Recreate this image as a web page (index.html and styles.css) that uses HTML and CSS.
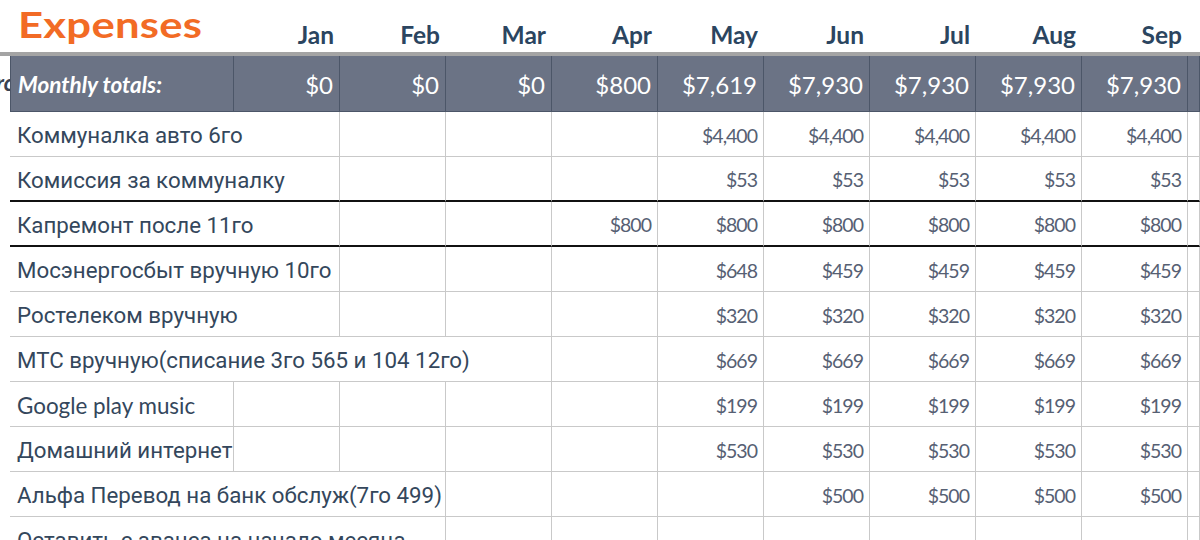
FILE: index.html
```html
<!DOCTYPE html>
<html lang="ru">
<head>
<meta charset="utf-8">
<title>Expenses</title>
<link rel="stylesheet" href="styles.css">
</head>
<body>
<div class="sheet">
  <div class="row head">
    <div class="title"><span class="title-text">Expenses</span></div>
    <div class="month">Jan</div><div class="month">Feb</div><div class="month">Mar</div><div class="month">Apr</div><div class="month">May</div><div class="month">Jun</div><div class="month">Jul</div><div class="month">Aug</div><div class="month">Sep</div><div class="month"></div>
  </div>
  <div class="row totals">
    <div class="gutter"><span class="clip">rc</span></div>
    <div class="tc label">Monthly totals:</div>
    <div class="tc">$0</div><div class="tc">$0</div><div class="tc">$0</div><div class="tc">$800</div><div class="tc">$7,619</div><div class="tc">$7,930</div><div class="tc">$7,930</div><div class="tc">$7,930</div><div class="tc">$7,930</div><div class="tc"></div>
  </div>

  <div class="row data">
    <div class="gutter"></div>
    <div class="c name cy s2">Коммуналка авто 6го</div>
    <div class="c"></div><div class="c"></div><div class="c"></div>
    <div class="c">$4,400</div><div class="c">$4,400</div><div class="c">$4,400</div><div class="c">$4,400</div><div class="c">$4,400</div><div class="c"></div>
  </div>
  <div class="row data thick">
    <div class="gutter"></div>
    <div class="c name cy s2">Комиссия за коммуналку</div>
    <div class="c"></div><div class="c"></div><div class="c"></div>
    <div class="c">$53</div><div class="c">$53</div><div class="c">$53</div><div class="c">$53</div><div class="c">$53</div><div class="c"></div>
  </div>
  <div class="row data thick">
    <div class="gutter"></div>
    <div class="c name cy s2">Капремонт после 11го</div>
    <div class="c"></div><div class="c"></div><div class="c">$800</div>
    <div class="c">$800</div><div class="c">$800</div><div class="c">$800</div><div class="c">$800</div><div class="c">$800</div><div class="c"></div>
  </div>
  <div class="row data">
    <div class="gutter"></div>
    <div class="c name cy s2">Мосэнергосбыт вручную 10го</div>
    <div class="c"></div><div class="c"></div><div class="c"></div>
    <div class="c">$648</div><div class="c">$459</div><div class="c">$459</div><div class="c">$459</div><div class="c">$459</div><div class="c"></div>
  </div>
  <div class="row data">
    <div class="gutter"></div>
    <div class="c name cy s2">Ростелеком вручную</div>
    <div class="c"></div><div class="c"></div><div class="c"></div>
    <div class="c">$320</div><div class="c">$320</div><div class="c">$320</div><div class="c">$320</div><div class="c">$320</div><div class="c"></div>
  </div>
  <div class="row data">
    <div class="gutter"></div>
    <div class="c name cy s4">МТС вручную(списание 3го 565 и 104 12го)</div>
    <div class="c"></div>
    <div class="c">$669</div><div class="c">$669</div><div class="c">$669</div><div class="c">$669</div><div class="c">$669</div><div class="c"></div>
  </div>
  <div class="row data">
    <div class="gutter"></div>
    <div class="c name">Google play music</div>
    <div class="c"></div><div class="c"></div><div class="c"></div><div class="c"></div>
    <div class="c">$199</div><div class="c">$199</div><div class="c">$199</div><div class="c">$199</div><div class="c">$199</div><div class="c"></div>
  </div>
  <div class="row data">
    <div class="gutter"></div>
    <div class="c name cy">Домашний интернет</div>
    <div class="c"></div><div class="c"></div><div class="c"></div><div class="c"></div>
    <div class="c">$530</div><div class="c">$530</div><div class="c">$530</div><div class="c">$530</div><div class="c">$530</div><div class="c"></div>
  </div>
  <div class="row data">
    <div class="gutter"></div>
    <div class="c name cy s3">Альфа Перевод на банк обслуж(7го 499)</div>
    <div class="c"></div><div class="c"></div>
    <div class="c"></div><div class="c">$500</div><div class="c">$500</div><div class="c">$500</div><div class="c">$500</div><div class="c"></div>
  </div>
  <div class="row data">
    <div class="gutter"></div>
    <div class="c name cy s3">Оставить с аванса на начало месяца</div>
    <div class="c"></div><div class="c"></div>
    <div class="c"></div><div class="c"></div><div class="c"></div><div class="c"></div><div class="c"></div><div class="c"></div>
  </div>
</div>
</body>
</html>
```
FILE: styles.css
```css
* { box-sizing: border-box; }
html, body { margin: 0; padding: 0; background: #fff; }
body {
  width: 1200px;
  height: 540px;
  overflow: hidden;
  font-family: Lato, Roboto, "Noto Sans", sans-serif;
}
.sheet { width: 1200px; }
.row {
  display: grid;
  grid-template-columns: 10px 224px repeat(9, 106px) 12px;
}
.head { height: 52px; }
.title {
  grid-column: 1 / span 2;
  padding-left: 18px;
  padding-top: 3px;
  font-size: 37px;
  font-weight: 700;
  color: #f26b25;
  line-height: 42px;
  white-space: nowrap;
}
.title-text {
  display: inline-block;
  transform: scaleX(1.18);
  transform-origin: left center;
  letter-spacing: 0.2px;
}
.month {
  align-self: end;
  text-align: right;
  padding-right: 6px;
  padding-bottom: 3px;
  font-size: 24.5px;
  font-weight: 700;
  color: #2b4560;
  line-height: 28px;
}
.totals {
  border-top: 4px solid #a4a4a4;
  height: 60px;
}
.gutter { position: relative; overflow: hidden; background: #fff; }
.clip {
  position: absolute;
  right: -4px;
  top: 13px;
  font-size: 22.5px;
  font-style: italic;
  font-weight: 700;
  color: #3a4250;
  line-height: 28px;
}
.tc {
  background: #6b7385;
  color: #fff;
  font-size: 24px;
  text-align: right;
  padding-right: 6px;
  border-right: 1px solid #4c5668;
  border-bottom: 1px solid #4c5668;
  display: flex;
  align-items: center;
  justify-content: flex-end;
  padding-top: 1px;
  white-space: nowrap;
}
.tc.label {
  justify-content: flex-start;
  padding-left: 7px;
  font-style: italic;
  font-weight: 700;
  font-size: 22.5px;
  border-left: 1px solid #4c5668;
}
.data { height: 45px; }
.c {
  border-right: 1px solid #c9c9c9;
  border-bottom: 1px solid #c9c9c9;
  display: flex;
  align-items: center;
  justify-content: flex-end;
  padding-right: 6px;
  padding-top: 2px;
  font-size: 19.5px;
  font-weight: 400;
  letter-spacing: -1px;
  color: #566073;
  white-space: nowrap;
}
.c.name {
  justify-content: flex-start;
  padding-left: 7px;
  padding-right: 0;
  overflow: hidden;
  font-size: 22.4px;
  font-weight: 400;
  letter-spacing: 0;
  color: #34475c;
}
.c.name.cy {
  font-family: Roboto, Lato, "Noto Sans", sans-serif;
  font-size: 22.3px;
}
.s2 { grid-column: span 2; }
.s3 { grid-column: span 3; }
.s4 { grid-column: span 4; }
.thick .c { border-bottom: 2px solid #111; }
```
